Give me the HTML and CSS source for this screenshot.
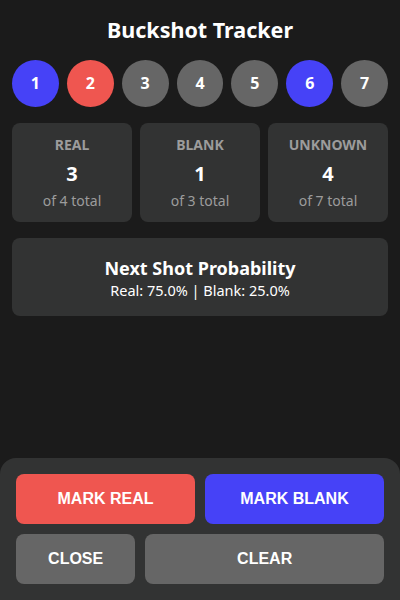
FILE: index.html
```html
<!DOCTYPE html>
<html>
<head>
<meta charset="utf-8">
<link rel="stylesheet" href="styles.css">
</head>
<body>
<div class="app">
  <main class="content">
    <h1 class="title">Buckshot Tracker</h1>
    <div class="shells">
      <div class="shell blank">1</div>
      <div class="shell real">2</div>
      <div class="shell">3</div>
      <div class="shell">4</div>
      <div class="shell">5</div>
      <div class="shell blank">6</div>
      <div class="shell">7</div>
    </div>
    <div class="stats">
      <div class="stat">
        <div class="stat-label">REAL</div>
        <div class="stat-value">3</div>
        <div class="stat-sub">of 4 total</div>
      </div>
      <div class="stat">
        <div class="stat-label">BLANK</div>
        <div class="stat-value">1</div>
        <div class="stat-sub">of 3 total</div>
      </div>
      <div class="stat">
        <div class="stat-label">UNKNOWN</div>
        <div class="stat-value">4</div>
        <div class="stat-sub">of 7 total</div>
      </div>
    </div>
    <div class="prob">
      <div class="prob-title">Next Shot Probability</div>
      <div class="prob-text">Real: 75.0% | Blank: 25.0%</div>
    </div>
  </main>
  <footer class="panel">
    <div class="row">
      <button class="btn btn-real">MARK REAL</button>
      <button class="btn btn-blank">MARK BLANK</button>
    </div>
    <div class="row">
      <button class="btn btn-gray btn-close">CLOSE</button>
      <button class="btn btn-gray btn-clear">CLEAR</button>
    </div>
  </footer>
</div>
</body>
</html>
```
FILE: styles.css
```css
* { box-sizing: border-box; }
html, body { margin: 0; padding: 0; height: 100%; }
body {
  background: #1b1b1b;
  color: #fff;
  font-family: "Noto Sans", "Open Sans", sans-serif;
}
.app {
  height: 100vh;
  display: flex;
  flex-direction: column;
}
.content {
  padding: 12px 12px 0;
}
.title {
  margin: 0 0 12px;
  font-size: 21.5px;
  line-height: 36px;
  font-weight: 700;
  text-align: center;
}
.shells {
  display: flex;
  gap: 8px;
}
.shell {
  flex: 1 1 0;
  aspect-ratio: 1;
  border-radius: 50%;
  background: #666;
  display: flex;
  align-items: center;
  justify-content: center;
  font-size: 16px;
  font-weight: 700;
}
.shell.blank { background: #4642f7; }
.shell.real { background: #ef5650; }
.stats {
  margin-top: 16px;
  display: grid;
  grid-template-columns: 1fr 1fr 1fr;
  gap: 8px;
}
.stat {
  background: #323333;
  border-radius: 8px;
  padding: 12px 4px;
  text-align: center;
}
.stat-label {
  font-size: 14px;
  line-height: 20px;
  font-weight: 700;
  color: #9c9c9c;
}
.stat-value {
  margin-top: 7px;
  font-size: 20px;
  line-height: 24px;
  font-weight: 700;
}
.stat-sub {
  margin-top: 6px;
  font-size: 14px;
  line-height: 18px;
  color: #9c9c9c;
}
.prob {
  margin-top: 16px;
  background: #323333;
  border-radius: 8px;
  padding: 18px 8px 16px;
  text-align: center;
}
.prob-title {
  font-size: 18px;
  line-height: 24px;
  font-weight: 700;
}
.prob-text {
  font-size: 14.5px;
  line-height: 20px;
}
.panel {
  margin-top: auto;
  background: #323333;
  border-radius: 16px 16px 0 0;
  padding: 16px;
  display: flex;
  flex-direction: column;
  gap: 10px;
}
.row {
  display: flex;
  gap: 10px;
}
.btn {
  flex: 1 1 0;
  min-width: 0;
  height: 50px;
  border: none;
  border-radius: 8px;
  color: #fff;
  font-family: "Liberation Sans", Arial, sans-serif;
  font-size: 16px;
  font-weight: 700;
  cursor: pointer;
  padding: 0;
}
.btn-real { background: #ef5650; }
.btn-blank { background: #4642f7; }
.btn-gray { background: #666; }
.btn-close { flex: 1 1 0; }
.btn-clear { flex: 2 1 0; }
```
